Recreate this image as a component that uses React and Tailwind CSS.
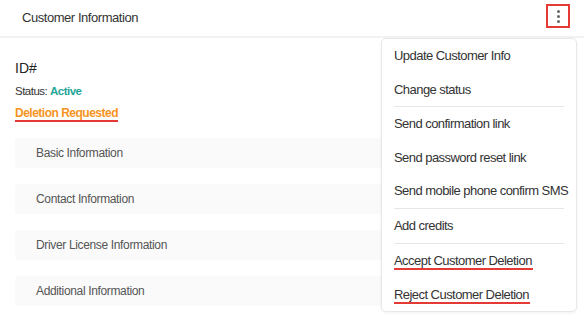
import React from "react";

const sections = [
  "Basic Information",
  "Contact Information",
  "Driver License Information",
  "Additional Information",
];

const menuGroups = [
  ["Update Customer Info", "Change status"],
  ["Send confirmation link", "Send password reset link", "Send mobile phone confirm SMS"],
  ["Add credits"],
  ["Accept Customer Deletion", "Reject Customer Deletion"],
];

const flagged = ["Accept Customer Deletion", "Reject Customer Deletion"];

const App = () => {
  return (
    <div className="relative w-[584px] h-[334px] overflow-hidden bg-white font-['Liberation_Sans',Arial,sans-serif] text-[#333]">
      {/* header */}
      <div className="h-[38px] flex items-center justify-between pl-[22px] pr-[14px] border-b-2 border-[#f2f2f2]">
        <h1 className="text-[13px] tracking-[-0.45px] text-[#333]">Customer Information</h1>
        <button className="w-[24px] h-[24px] mb-[4px] border-2 border-[#e53935] flex flex-col items-center justify-center gap-[2px]">
          <span className="w-[3px] h-[3px] rounded-full bg-[#666]" />
          <span className="w-[3px] h-[3px] rounded-full bg-[#666]" />
          <span className="w-[3px] h-[3px] rounded-full bg-[#666]" />
        </button>
      </div>

      {/* body */}
      <div className="px-[15px] pt-[22px]">
        <div className="text-[14px] leading-[17px] text-[#222]">ID#</div>
        <div className="mt-[8px] text-[11.5px] leading-[13px] tracking-[-0.5px]">
          Status: <span className="font-bold text-[#26a69a]">Active</span>
        </div>
        <div className="mt-[9px] w-fit text-[12px] leading-[13px] tracking-[-0.5px] font-bold text-[#f7941d] border-b-2 border-[#e53935]">
          Deletion Requested
        </div>
        <div className="mt-[16px] flex flex-col gap-[16px]">
          {sections.map((s) => (
            <div key={s} className="h-[30px] bg-[#fafafa] rounded-[3px] pl-[21px] flex items-center text-[12px] tracking-[-0.35px] text-[#555]">
              {s}
            </div>
          ))}
        </div>
      </div>

      {/* dropdown menu */}
      <div className="absolute left-[381px] top-[38px] w-[196px] bg-white border border-[#e8e8e8] rounded-[5px] shadow-[0_1px_3px_rgba(0,0,0,0.06)]">
        {menuGroups.map((group, gi) => (
          <div key={gi} className={gi > 0 ? "mx-[12px] border-t border-[#e6e6e6]" : "mx-[12px]"}>
            {group.map((item) => (
              <div key={item} className="h-[33.6px] flex items-center whitespace-nowrap text-[13px] tracking-[-0.55px] text-[#333]">
                {flagged.includes(item) ? (
                  <span className="block mt-[3px] leading-[15px] border-b-2 border-[#e53935] pr-[1px]">
                    {item}
                  </span>
                ) : (
                  item
                )}
              </div>
            ))}
          </div>
        ))}
      </div>
    </div>
  );
};

export default App;
